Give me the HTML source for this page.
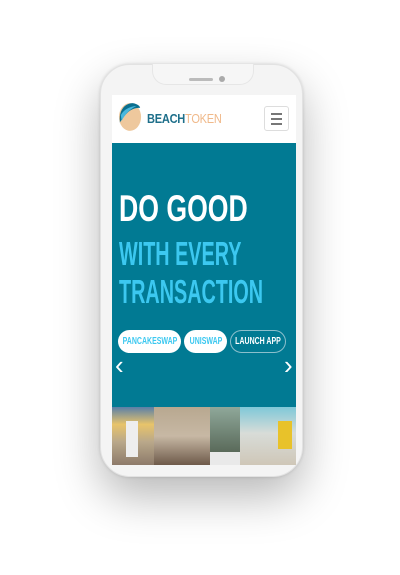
<!DOCTYPE html>
<html><head><style>
body{margin:0;width:400px;height:575px;background:#fff;position:relative;overflow:hidden;font-family:"Liberation Sans",sans-serif}
.phone{position:absolute;left:100px;top:64px;width:203px;height:413px;border-radius:30px;background:#f4f4f4;box-shadow:0 20px 45px rgba(0,0,0,.28),0 0 3px rgba(0,0,0,.15);border:1px solid #e2e2e2;box-sizing:border-box}
.screen{position:absolute;left:112px;top:95px;width:184px;height:370px;background:#fff;overflow:hidden}
.notch{position:absolute;left:152px;top:64px;width:100px;height:20px;background:#f6f6f6;border-radius:0 0 14px 14px;border:1px solid #e6e6e6;border-top:none}
.spk{position:absolute;left:189px;top:78px;width:24px;height:3px;background:#bbb;border-radius:2px}
.cam{position:absolute;left:219px;top:76px;width:6px;height:6px;background:#aaa;border-radius:50%}
.teal{position:absolute;left:0;top:48px;width:184px;height:264px;background:#017a93}
.t{position:absolute;left:7px;font-weight:bold;white-space:nowrap;transform-origin:left top;line-height:1}
.btn{position:absolute;top:187px;height:23px;border-radius:12px;background:#fff;box-sizing:border-box;overflow:hidden}
.btn span{position:absolute;left:50%;top:6px;color:#3cc8f0;font-size:10px;font-weight:bold;line-height:11px;white-space:nowrap;transform:translateX(-50%) scaleX(.7)}
.photos{position:absolute;left:0;top:312px;width:184px;height:58px}
</style></head><body>
<div class="phone"></div>
<div class="notch"></div><div class="spk"></div><div class="cam"></div>
<div class="screen">
 <svg style="position:absolute;left:6px;top:6px" width="24" height="32" viewBox="0 0 26 32">
  <ellipse cx="13" cy="16" rx="12" ry="15" fill="#eec89d"/>
  <path d="M2 20 C1 8 8 1 16 1 C22 2 24 5 24 6 C14 6 8 12 2 22Z" fill="#0a6f8f"/>
  <path d="M3 14 C6 8 12 5 20 4 C14 7 8 12 4 20Z" fill="#48b7dd"/>
 </svg>
 <div style="position:absolute;left:35px;top:16px;font-size:13px;font-weight:bold;color:#1e6f8a;letter-spacing:-.3px;transform:scaleX(.85);transform-origin:left top;white-space:nowrap">BEACH<span style="color:#f0b98a;font-weight:normal">TOKEN</span></div>
 <div style="position:absolute;left:152px;top:11px;width:25px;height:25px;border:1px solid #ddd;border-radius:3px;box-sizing:border-box">
  <div style="position:absolute;left:6px;top:6px;width:11px;height:2px;background:#777"></div>
  <div style="position:absolute;left:6px;top:11px;width:11px;height:2px;background:#777"></div>
  <div style="position:absolute;left:6px;top:16px;width:11px;height:2px;background:#777"></div>
 </div>
 <div class="teal">
  <div class="t" style="top:47px;font-size:37px;color:#fff;transform:scaleX(.72)">DO GOOD</div>
  <div class="t" style="top:94px;font-size:33px;color:#3cc8f0;transform:scaleX(.6)">WITH EVERY</div>
  <div class="t" style="top:132px;font-size:33px;color:#3cc8f0;transform:scaleX(.6)">TRANSACTION</div>
  <div class="btn" style="left:6px;width:63px"><span>PANCAKESWAP</span></div>
  <div class="btn" style="left:72px;width:43px"><span>UNISWAP</span></div>
  <div class="btn" style="left:118px;width:56px;background:transparent;border:1.5px solid #8bbfcc"><span style="color:#fff;top:5px">LAUNCH APP</span></div>
  <div style="position:absolute;left:3px;top:207px;color:#fff;font-size:26px;line-height:30px">&#8249;</div>
  <div style="position:absolute;left:172px;top:207px;color:#fff;font-size:26px;line-height:30px">&#8250;</div>
 </div>
 <div class="photos">
  <div style="position:absolute;left:0;top:0;width:42px;height:58px;background:linear-gradient(#5a7fa8 0,#e8c46a 30%,#b9a88a 60%,#8d7a6a 100%)"></div>
  <div style="position:absolute;left:14px;top:14px;width:12px;height:36px;background:#eee"></div>
  <div style="position:absolute;left:42px;top:0;width:56px;height:58px;background:linear-gradient(#b8a890,#c7b8a4 50%,#6e5a4a)"></div>
  <div style="position:absolute;left:98px;top:0;width:30px;height:45px;background:linear-gradient(#8fa89a,#5a6a5a)"></div>
  <div style="position:absolute;left:98px;top:45px;width:30px;height:13px;background:#e9e9e9"></div>
  <div style="position:absolute;left:128px;top:0;width:56px;height:58px;background:linear-gradient(#7fc8d8,#d8dcd8 45%,#cfc7b8)"></div>
  <div style="position:absolute;left:166px;top:14px;width:14px;height:28px;background:#e8c22a"></div>
 </div>
</div>
</body></html>
